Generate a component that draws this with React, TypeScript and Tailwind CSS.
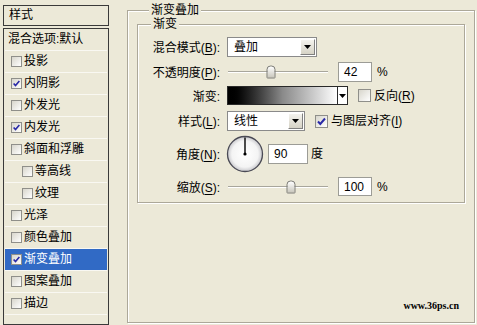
import React from "react";

const FONT = { fontFamily: '"Liberation Sans", "Noto Sans CJK SC", sans-serif' };

function Check({ checked, small }: { checked?: boolean; small?: boolean }) {
  return (
    <span
      className={
        "inline-flex shrink-0 items-center justify-center border border-[#8f8f8a] bg-linear-to-br from-[#d8d6cc] to-white " +
        (small ? "w-[11px] h-[11px]" : "w-[13px] h-[13px]")
      }
    >
      {checked && (
        <svg width={small ? 9 : 11} height={small ? 9 : 11} viewBox="0 0 11 11">
          <polyline points="2,5.5 4.3,8 9,2.5" fill="none" stroke="#2a2aa8" strokeWidth="2" />
        </svg>
      )}
    </span>
  );
}

function Arrow() {
  return (
    <svg width="7" height="4" viewBox="0 0 7 4">
      <polygon points="0,0 7,0 3.5,4" fill="#000" />
    </svg>
  );
}

function Select({ value, w }: { value: string; w: string }) {
  return (
    <div className={"flex h-full items-stretch border border-[#8a8a8a] bg-white " + w}>
      <div className="flex flex-1 items-center pl-[6px] text-[12px]">{value}</div>
      <div className="m-px flex w-[15px] items-center justify-center border border-t-white border-l-white border-r-[#808080] border-b-[#808080] bg-linear-to-b from-[#f4f3ee] to-[#d6d3c6]">
        <Arrow />
      </div>
    </div>
  );
}

function Slider({ pos }: { pos: number }) {
  return (
    <div className="relative h-full w-[100px] ml-px">
      <div className="absolute left-0 right-0 top-1/2 h-[2px] -translate-y-1/2 border-t border-t-[#a8a69c] border-b border-b-white" />
      <div
        className="absolute top-1/2 h-[13px] w-[9px] -translate-x-1/2 -translate-y-1/2 rounded-t-[4px] rounded-b-[1px] border border-[#7c7c78] bg-linear-to-b from-white to-[#c9c7bd]"
        style={{ left: pos }}
      />
    </div>
  );
}

function NumBox({ v, w }: { v: string; w: string }) {
  return (
    <div className={"flex h-full items-center border border-[#9c9c96] bg-white pl-[5px] text-[12px] " + w}>{v}</div>
  );
}

function U({ c }: { c: string }) {
  return <span className="underline underline-offset-2">{c}</span>;
}

function Label({ children }: { children: React.ReactNode }) {
  return <div className="w-[82px] shrink-0 pt-[2px] text-right text-[12px]">{children}</div>;
}

const rows: { t: string; c?: boolean; sel?: boolean; ind?: boolean; noCb?: boolean }[] = [
  { t: "混合选项:默认", noCb: true },
  { t: "投影" },
  { t: "内阴影", c: true },
  { t: "外发光" },
  { t: "内发光", c: true },
  { t: "斜面和浮雕" },
  { t: "等高线", ind: true },
  { t: "纹理", ind: true },
  { t: "光泽" },
  { t: "颜色叠加" },
  { t: "渐变叠加", c: true, sel: true },
  { t: "图案叠加" },
  { t: "描边" },
];

export default function App() {
  return (
    <div className="flex h-[325px] w-[477px] overflow-hidden bg-[#ECE9D8] text-black" style={FONT}>
      {/* Left panel */}
      <div className="ml-[3px] mt-[5px] flex w-[106px] shrink-0 flex-col">
        <div className="flex h-[22px] items-center border border-[#3a3a3a] pl-[5px] text-[12px]">样式</div>
        <div className="mt-[2px] h-[320px] border border-[#3a3a3a] p-px pt-0">
          {rows.map((r) => (
            <div
              key={r.t}
              className={
                "flex h-[22px] items-center border-b border-b-[#f9f8f2] text-[12px] " +
                (r.sel ? "bg-[#316AC5] text-white " : "") +
                (r.noCb ? "pl-[3px]" : r.ind ? "pl-[17px]" : "pl-[6px]")
              }
            >
              {!r.noCb && <Check checked={r.c} small />}
              <span className={r.noCb ? "" : "ml-[2px]"}>{r.t}</span>
            </div>
          ))}
        </div>
      </div>

      {/* Right area */}
      <fieldset className="relative ml-[18px] mt-[3px] h-[320px] w-[345px] shrink-0 border border-[#aca899] px-[9px] shadow-[inset_1px_1px_0_#fff,1px_1px_0_#fff]">
        <legend className="ml-[12px] bg-[#ECE9D8] px-[2px] text-[12px] leading-[14px]">渐变叠加</legend>
        <fieldset className="h-[186px] w-[328px] border border-[#aca899] shadow-[inset_1px_1px_0_#fff,1px_1px_0_#fff]">
          <legend className="ml-[13px] bg-[#ECE9D8] px-[2px] text-[12px] leading-[14px]">渐变</legend>
          <div className="flex flex-col">
            <div className="mt-[6px] flex h-[20px] items-center">
              <Label>混合模式(<U c="B" />):</Label>
              <div className="ml-[7px] h-full">
                <Select value="叠加" w="w-[90px]" />
              </div>
            </div>
            <div className="mt-[5px] flex h-[20px] items-center">
              <Label>不透明度(<U c="P" />):</Label>
              <div className="ml-[7px] h-full">
                <Slider pos={43} />
              </div>
              <div className="ml-[10px] h-full">
                <NumBox v="42" w="w-[34px]" />
              </div>
              <span className="ml-[5px] text-[12px]">%</span>
            </div>
            <div className="mt-[4px] flex h-[19px] items-center">
              <Label>渐变:</Label>
              <div className="ml-[7px] flex h-full w-[121px] border border-[#2a2a2a]">
                <div className="h-full flex-1 bg-linear-to-r from-black via-[#8a8a8a] to-white" />
                <div className="flex w-[10px] items-center justify-center border-l border-l-[#2a2a2a] bg-white">
                  <Arrow />
                </div>
              </div>
              <div className="ml-[10px] flex items-center">
                <Check />
                <span className="ml-[3px] text-[12px]">反向(<U c="R" />)</span>
              </div>
            </div>
            <div className="mt-[6px] flex h-[20px] items-center">
              <Label>样式(<U c="L" />):</Label>
              <div className="ml-[7px] h-full">
                <Select value="线性" w="w-[78px]" />
              </div>
              <div className="ml-[10px] flex items-center">
                <Check checked />
                <span className="ml-[3px] text-[12px]">与图层对齐(<U c="I" />)</span>
              </div>
            </div>
            <div className="mt-[4px] flex h-[38px] items-center">
              <Label>角度(<U c="N" />):</Label>
              <div className="ml-[6px]">
                <svg width="38" height="38" viewBox="0 0 38 38">
                  <defs>
                    <radialGradient id="dg" cx="50%" cy="50%" r="50%">
                      <stop offset="0%" stopColor="#ffffff" />
                      <stop offset="75%" stopColor="#f4f4f4" />
                      <stop offset="100%" stopColor="#c8c8cc" />
                    </radialGradient>
                  </defs>
                  <circle cx="19" cy="19" r="17.5" fill="url(#dg)" stroke="#4a4a55" strokeWidth="1.3" />
                  <line x1="19" y1="19" x2="19" y2="2.5" stroke="#000" strokeWidth="1.4" />
                  <circle cx="19" cy="19" r="1.6" fill="#000" />
                </svg>
              </div>
              <div className="ml-[4px] h-[20px]">
                <NumBox v="90" w="w-[40px]" />
              </div>
              <span className="ml-[3px] text-[12px]">度</span>
            </div>
            <div className="mt-[4px] flex h-[19px] items-center">
              <Label>缩放(<U c="S" />):</Label>
              <div className="ml-[7px] h-full">
                <Slider pos={63} />
              </div>
              <div className="ml-[10px] h-full">
                <NumBox v="100" w="w-[34px]" />
              </div>
              <span className="ml-[5px] text-[12px]">%</span>
            </div>
          </div>
        </fieldset>
        <div
          className="absolute bottom-[9px] right-[15px] text-[10px] font-bold"
          style={{ fontFamily: '"Liberation Serif", serif' }}
        >
          www.36ps.cn
        </div>
      </fieldset>
    </div>
  );
}
